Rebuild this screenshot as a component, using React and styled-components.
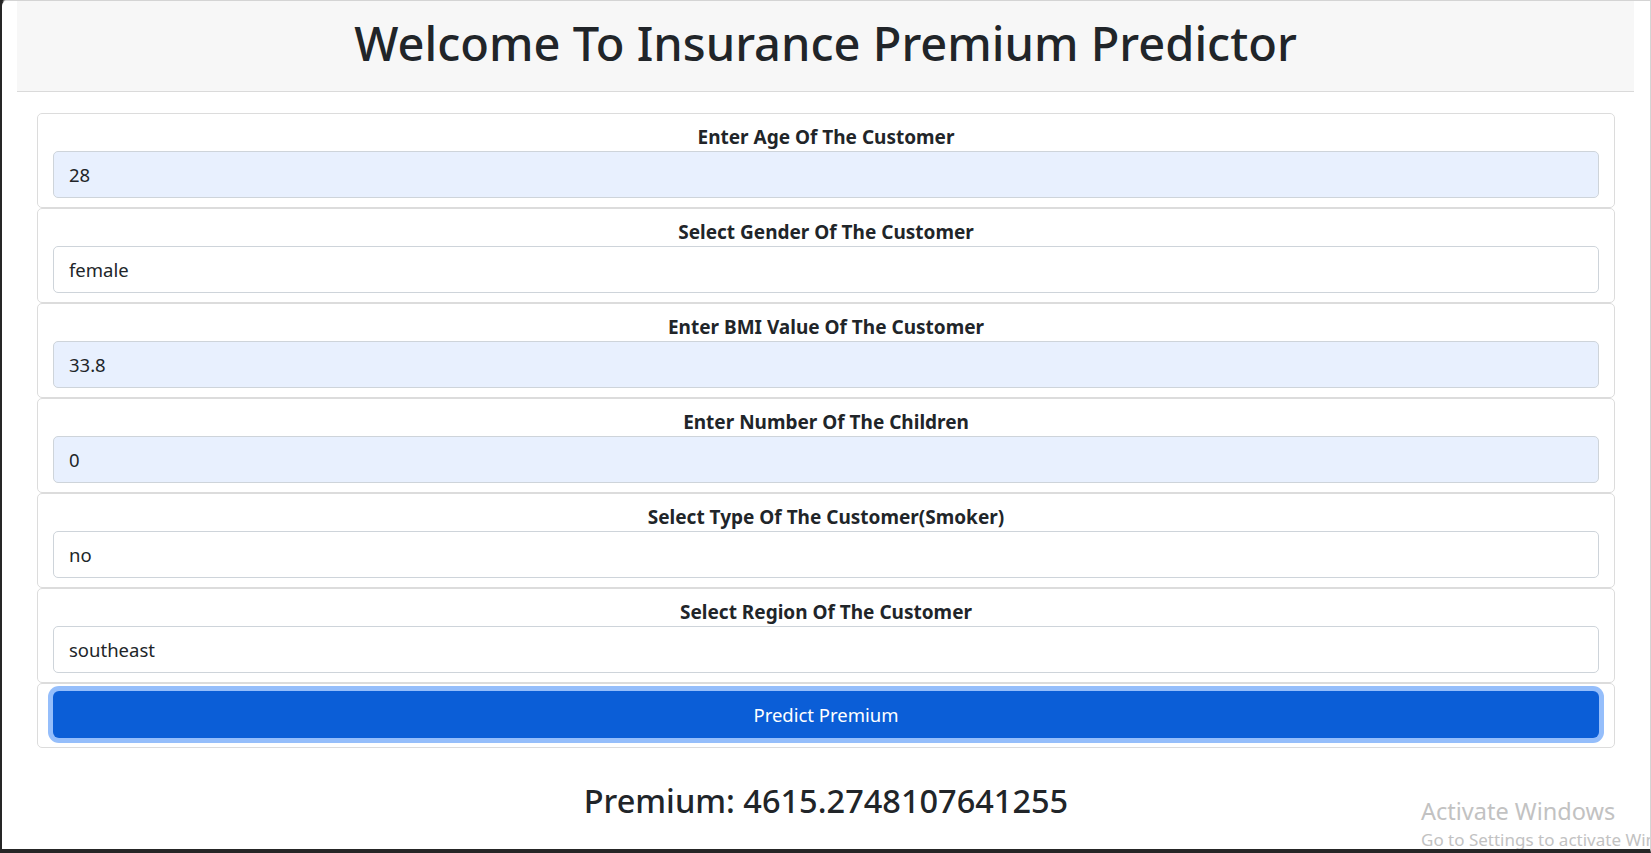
import React from 'react';
import styled, { createGlobalStyle } from 'styled-components';

const GlobalStyle = createGlobalStyle`
    html, body {
        margin: 0;
        padding: 0;
        background: #262626;
    }
    * {
        box-sizing: border-box;
    }
`

const Window = styled.div`
    position: relative;
    height: 853px;
    overflow: hidden;
    background: #ffffff;
    border-top: 1px solid #d4d4d4;
    border-right: 1px solid #d4d4d4;
    border-left: 2px solid #262626;
    border-bottom: 4px solid #262626;
    border-top-left-radius: 6px;
    font-family: 'Noto Sans', 'Open Sans', sans-serif;
    color: #212529;
`

const Header = styled.header`
    height: 91px;
    margin: 0 16px 0 15px;
    padding-bottom: 6px;
    background: #f7f7f7;
    border-bottom: 1px solid #dadada;
    display: flex;
    align-items: center;
    justify-content: center;
`

const Title = styled.h1`
    margin: 0;
    font-size: 47px;
    font-weight: 500;
    line-height: 1.2;
`

const Main = styled.main`
    padding: 21px 35px 0 35px;
`

const Field = styled.div`
    height: 95px;
    border: 1px solid #dcdcdc;
    border-radius: 5px;
    padding: 6px 15px 0 15px;
    display: flex;
    flex-direction: column;
`

const ButtonCard = styled(Field)`
    height: 65px;
    padding: 7px 15px 0 15px;
`

const Label = styled.label`
    display: block;
    text-align: center;
    font-size: 19px;
    font-weight: 700;
    line-height: 27px;
    padding-top: 4px;
`

const Control = styled.input`
    width: 100%;
    height: 47px;
    padding: 0 15px;
    font-family: inherit;
    font-size: 18.5px;
    color: #212529;
    background: ${p => (p.$filled ? '#e8f0fe' : '#ffffff')};
    border: 1px solid #ced4da;
    border-radius: 5px;
    outline: none;
`

const Select = styled(Control).attrs({ as: 'select' })`
    appearance: none;
    -webkit-appearance: none;
`

const PredictButton = styled.button`
    width: 100%;
    height: 47px;
    border: none;
    border-radius: 6px;
    background: #0b5ed7;
    color: #ffffff;
    font-family: inherit;
    font-size: 18.5px;
    box-shadow: 0 0 0 5px #95befb;
    cursor: pointer;
`

const Result = styled.h3`
    margin: 33px 0 0 0;
    text-align: center;
    font-size: 32.5px;
    font-weight: 500;
    line-height: 1.2;
`

const Watermark = styled.div`
    position: absolute;
    left: 1419px;
    top: 794px;
    color: #c2c2c2;
    white-space: nowrap;
    pointer-events: none;
`

const WatermarkTitle = styled.div`
    font-size: 23.5px;
    line-height: 32px;
`

const WatermarkText = styled.div`
    font-size: 17px;
    line-height: 26px;
`

const fields = [
    { label: 'Enter Age Of The Customer', value: '28', filled: true },
    { label: 'Select Gender Of The Customer', value: 'female', options: ['male', 'female'] },
    { label: 'Enter BMI Value Of The Customer', value: '33.8', filled: true },
    { label: 'Enter Number Of The Children', value: '0', filled: true },
    { label: 'Select Type Of The Customer(Smoker)', value: 'no', options: ['yes', 'no'] },
    { label: 'Select Region Of The Customer', value: 'southeast', options: ['southwest', 'southeast', 'northwest', 'northeast'] },
];

export default function App() {
    return (
        <>
            <GlobalStyle />
            <Window>
                <Header>
                    <Title>Welcome To Insurance Premium Predictor</Title>
                </Header>
                <Main>
                    {fields.map(f => (
                        <Field key={f.label}>
                            <Label>{f.label}</Label>
                            {f.options ? (
                                <Select defaultValue={f.value}>
                                    {f.options.map(o => <option key={o} value={o}>{o}</option>)}
                                </Select>
                            ) : (
                                <Control $filled={f.filled} defaultValue={f.value} />
                            )}
                        </Field>
                    ))}
                    <ButtonCard>
                        <PredictButton>Predict Premium</PredictButton>
                    </ButtonCard>
                    <Result>Premium: 4615.2748107641255</Result>
                </Main>
                <Watermark>
                    <WatermarkTitle>Activate Windows</WatermarkTitle>
                    <WatermarkText>Go to Settings to activate Windows.</WatermarkText>
                </Watermark>
            </Window>
        </>
    );
}
